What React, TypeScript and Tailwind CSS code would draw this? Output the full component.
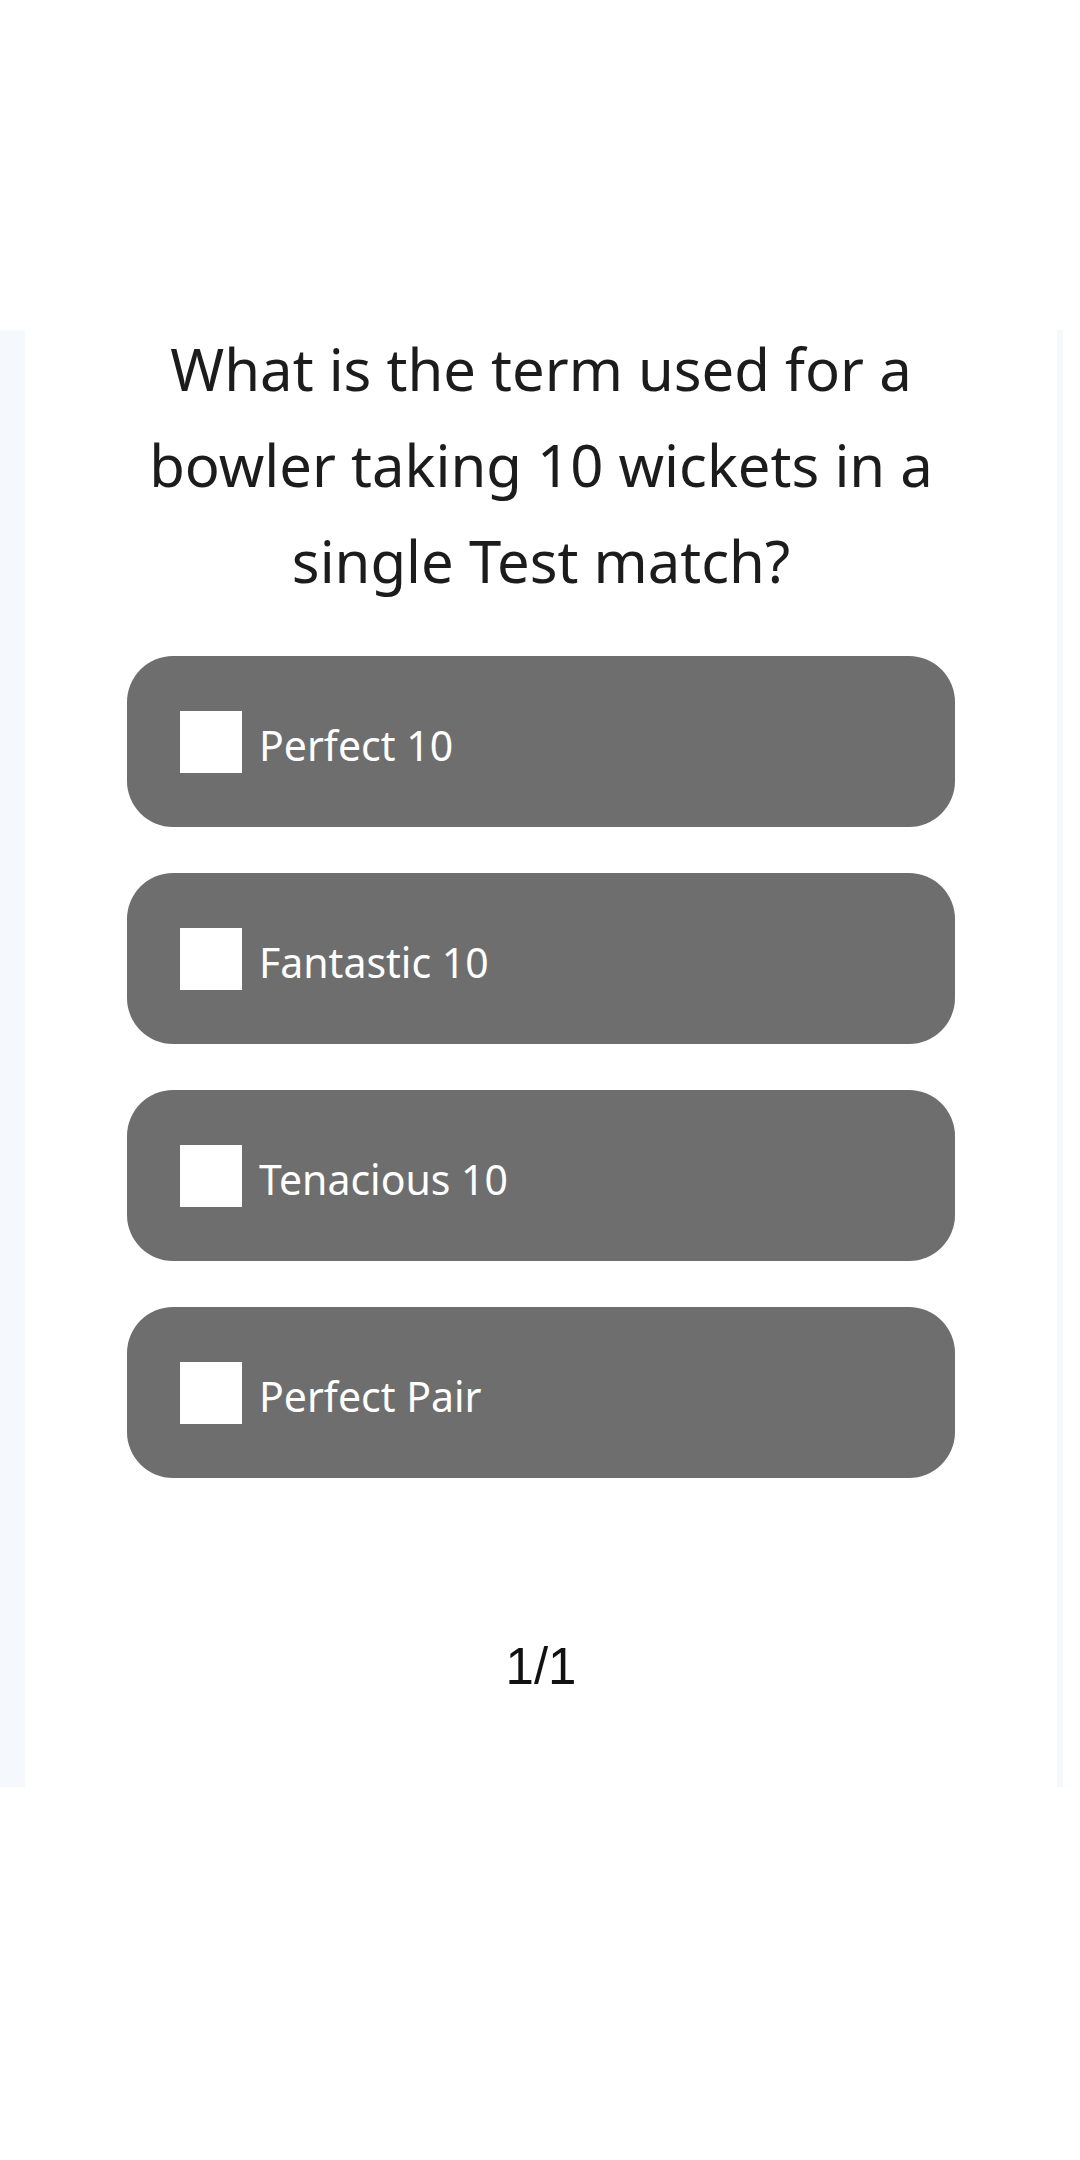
import React from "react";

const options = ["Perfect 10", "Fantastic 10", "Tenacious 10", "Perfect Pair"];

export default function App() {
  return (
    <div className="w-[1080px] h-[2160px] bg-white overflow-hidden" style={{ fontFamily: '"Noto Sans", "Open Sans", sans-serif' }}>
      <div className="h-[330px]" />
      <div className="w-[1063px] h-[1457px] bg-[#f5f9fe] pl-[25px] pr-[6px]">
        <div className="h-full bg-white pl-[102px] flex flex-col">
          <div className="w-[828px] text-center text-[#1c1c1c] text-[58px] leading-[96px] mt-[-9px]">
            <span className="block">What is the term used for a</span>
            <span className="block">bowler taking 10 wickets in a</span>
            <span className="block">single Test match?</span>
          </div>
          <div className="flex flex-col gap-[46px] mt-[47px] w-[828px]">
            {options.map((o) => (
              <div key={o} className="h-[171px] rounded-[46px] bg-[#6e6e6e] flex items-center pl-[53px]">
                <div className="w-[62px] h-[62px] bg-white shrink-0" />
                <span className="ml-[17px] text-white text-[41px] leading-none mt-[8px]">{o}</span>
              </div>
            ))}
          </div>
          <div className="w-[828px] text-center text-[#111] text-[51px] leading-none mt-[163px]" style={{ fontFamily: '"Liberation Sans", Arial, sans-serif' }}>
            1/1
          </div>
        </div>
      </div>
    </div>
  );
}
